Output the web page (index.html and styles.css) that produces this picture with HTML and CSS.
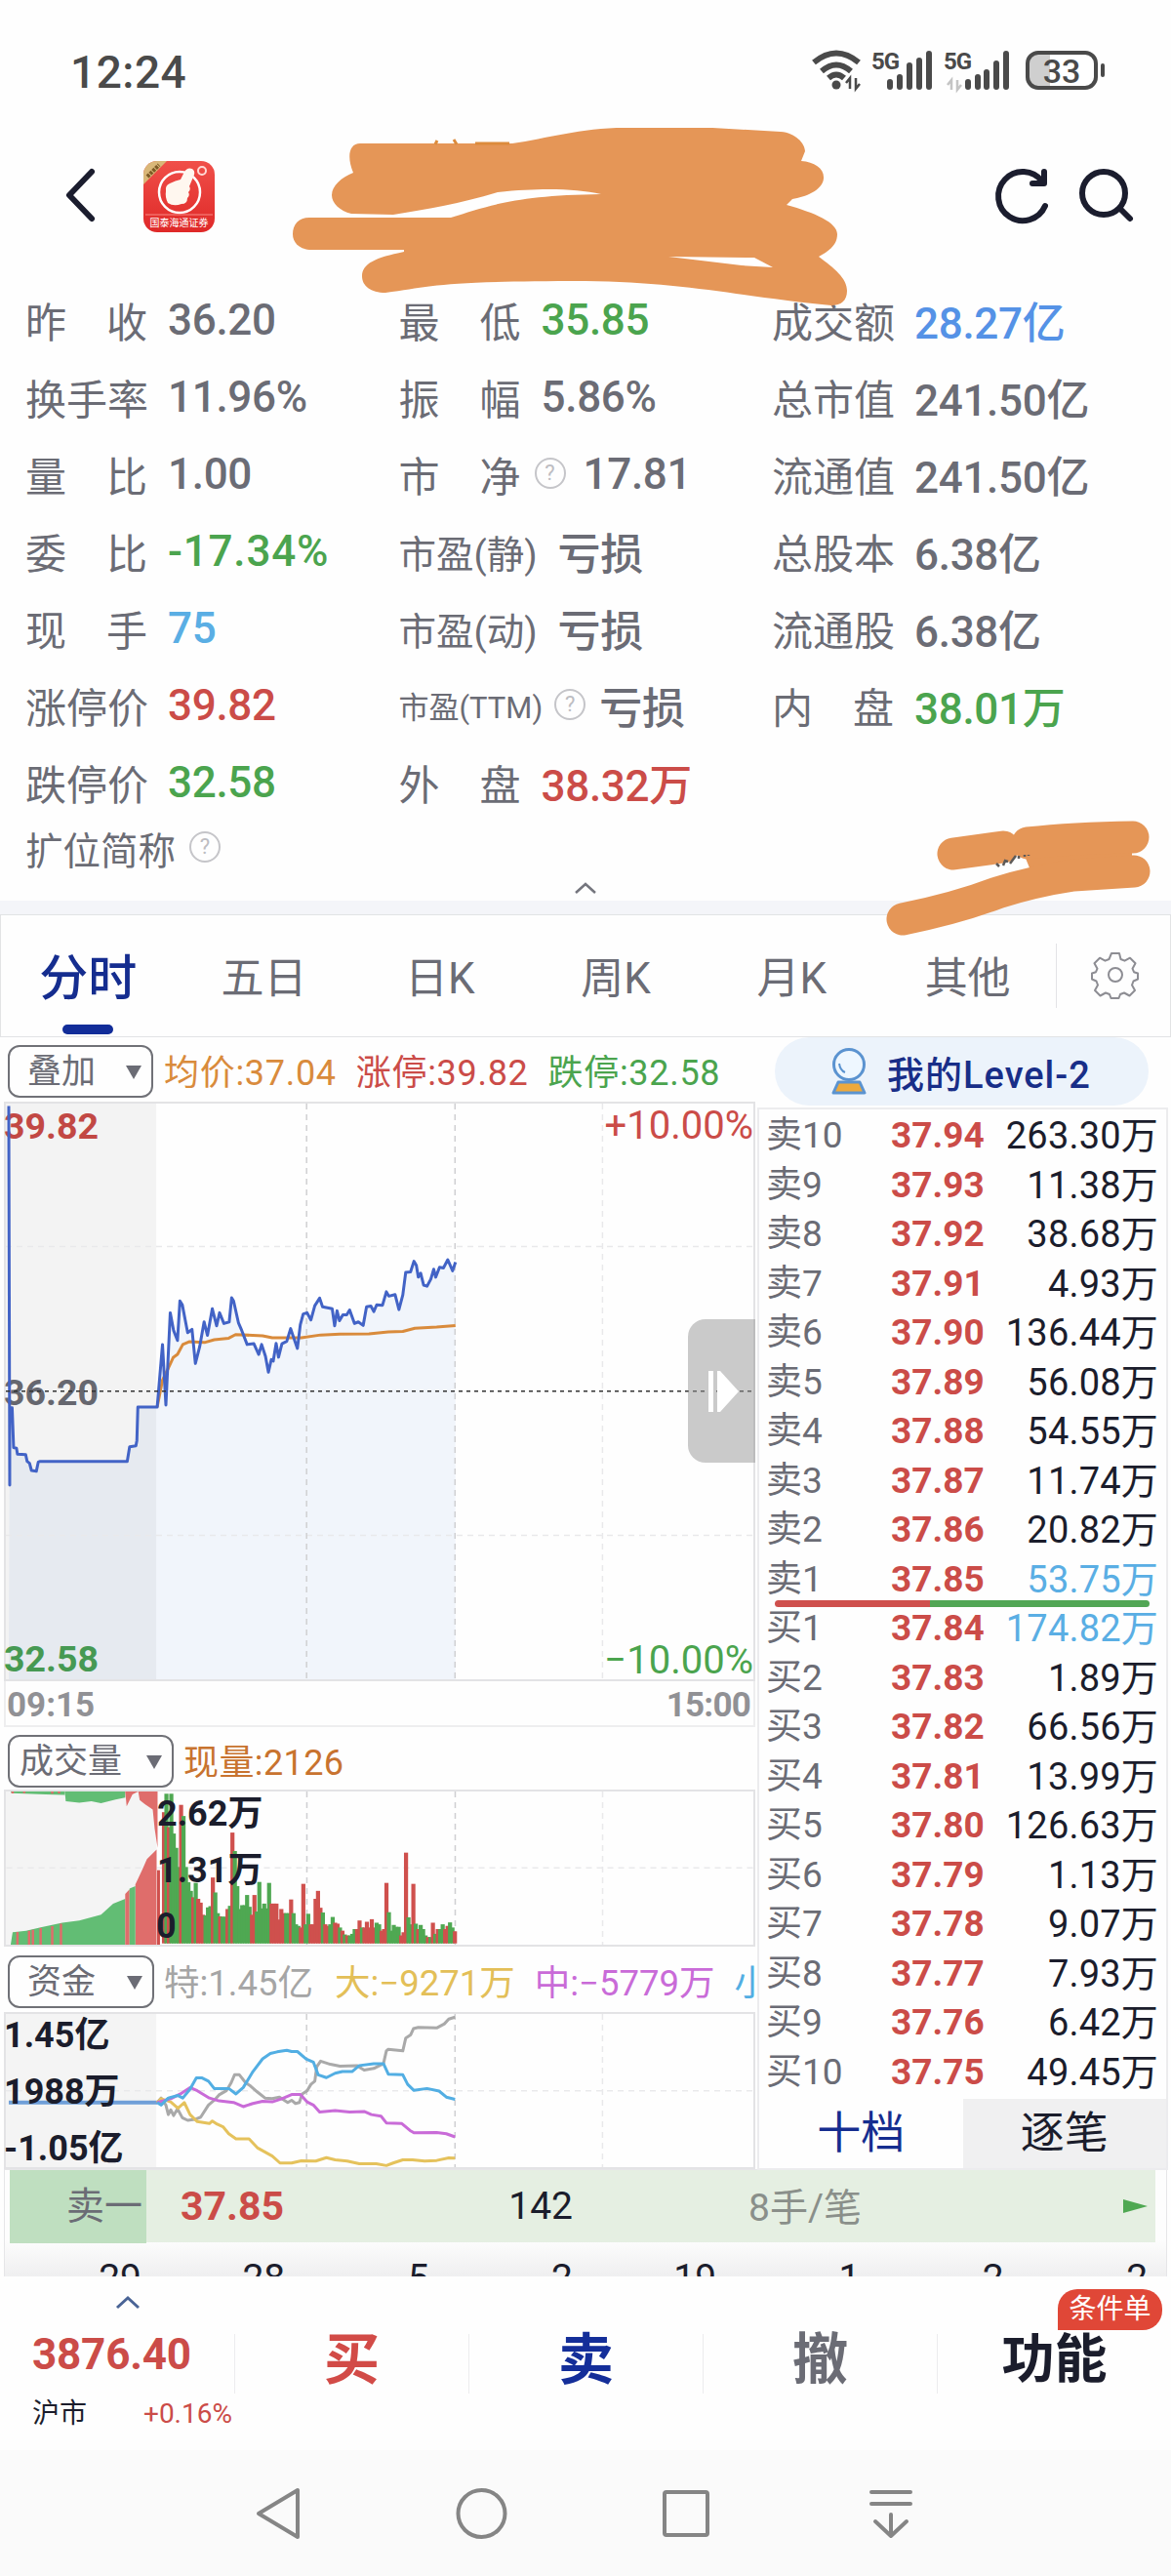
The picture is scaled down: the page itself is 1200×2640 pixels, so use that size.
FILE: index.html
```
<!DOCTYPE html>
<html lang="zh-CN">
<head>
  <meta charset="utf-8">
  <title>分时</title>
  <link rel="stylesheet" href="styles.css">
</head>

<body>
  <div class="status-bar">
    <div class="clock">12:24</div>
    <svg class="status-icons" width="310" height="50" viewBox="828 48 310 50">
      <g fill="none" stroke="#4a4a4a" stroke-width="6">
        <path d="M834 64 Q857 45 880 64"/>
        <path d="M842 73 Q857 60 872 73"/>
        <path d="M849 80 Q857 73 865 80"/>
      </g>
      <circle cx="857" cy="87" r="4.5" fill="#4a4a4a"/>
      <path d="M871 91V80l-4 5M877 80v11l4-5" fill="none" stroke="#4a4a4a" stroke-width="2.5"/>
      <text class="net" x="893" y="71">5G</text>
      <text class="net" x="967" y="71">5G</text>
      <g stroke="#4a4a4a" stroke-width="6" stroke-linecap="round">
        <path d="M912 84v5M922 79v10M932 67v22M952 55v34M942 62v27"/>
        <path d="M992 84v5M1002 79v10M1011 74v15M1021 65v24M1031 55v34"/>
      </g>
      <path d="M975 92V82l-4 5M981 82v10l4-5" fill="none" stroke="#c4c4c4" stroke-width="2.5"/>
      <rect x="1053" y="54" width="70" height="36" rx="11" fill="#fff"/>
      <path d="M1064 54h12v36h-12q-11 0-11-11v-14q0-11 11-11z" fill="#cfcfcf"/>
      <rect x="1053" y="54" width="70" height="36" rx="11" fill="none" stroke="#4a4a4a" stroke-width="4"/>
      <path d="M1130 67v10" stroke="#4a4a4a" stroke-width="4" stroke-linecap="round"/>
      <text class="battery" x="1088" y="85" text-anchor="middle">33</text>
    </svg>
  </div>

  <div class="header">
    <svg class="back" width="34" height="58" viewBox="0 0 34 58"><path d="M29 5 L6 29 L29 53" fill="none" stroke="#1b1d2e" stroke-width="6" stroke-linecap="round" stroke-linejoin="round"/></svg>
    <div class="logo">
      <svg width="73" height="73" viewBox="0 0 73 73">
        <path d="M0 0h24L0 24z" fill="#d9b778"/>
        <path d="M4 16L16 4" stroke="#7d5a25" stroke-width="4" stroke-dasharray="3 1"/>
        <circle cx="37" cy="32" r="21" fill="none" stroke="#fff" stroke-width="2.5"/>
        <path d="M27 23q6-3 11-4l4-8q3-5 8-3 3 2 2 6l-5 12q2 3-1 6 2 3-1 6 0 6-6 6-8 3-14-1-3-6-2-12-1-6 4-8z" fill="#fff7ef"/>
        <circle cx="60" cy="10" r="4" fill="none" stroke="#ffd9d5" stroke-width="2"/>
        <path d="M2 55H71" stroke="#f98b84" stroke-width="1"/>
        <text x="36.5" y="67" text-anchor="middle">国泰海通证券</text>
      </svg>
    </div>
    <svg class="tools" width="150" height="64" viewBox="1016 168 150 64">
      <g fill="none" stroke="#1b1d2e" stroke-width="6" stroke-linecap="round" stroke-linejoin="round">
        <path d="M1069 211A25 25 0 1 1 1066 186"/>
        <path d="M1068 176v12h-12"/>
        <circle cx="1129" cy="198" r="22"/>
        <path d="M1146 214l10 10"/>
      </g>
    </svg>
    <svg class="scribble-name" width="580" height="190" viewBox="295 125 580 190">
      <path fill="#e59657" d="M369 147 H525 C560 142 595 131 640 131 H730 L800 135 C815 136 825 147 825 155 L821 165 C835 166 845 173 844 183 C843 195 825 202 812 204 L806 210 C835 218 858 228 858 240 C858 252 848 258 839 263 C855 275 868 285 868 298 C868 308 862 313 852 313 C760 304 700 289 600 288 C450 288 445 293 395 300 C380 300 371 293 371 283 C371 270 385 264 414 258 V256 H317 C306 255 300 248 300 240 C300 230 306 223 317 223 H462 C500 211 530 200 616 199 C590 194 560 192 510 197 C470 209 440 214 403 220 L360 219 C348 216 340 208 340 200 C340 190 350 182 362 177 C355 160 358 147 369 147Z"/>
      <path fill="#fff" d="M685 263 L773 264 L792 274 L760 272Z"/>
      <path d="M448 144l-2 4M465 143l3 5M487 147h35" stroke="#dc8b3c" stroke-width="3"/>
    </svg>
  </div>

  <div class="stats">
    <div class="stats-col">
      <div class="stat"><span class="label">昨 收</span><span class="value">36.20</span></div>
      <div class="stat"><span class="label">换手率</span><span class="value">11.96%</span></div>
      <div class="stat"><span class="label">量 比</span><span class="value">1.00</span></div>
      <div class="stat"><span class="label">委 比</span><span class="value green wide">-17.34%</span></div>
      <div class="stat"><span class="label">现 手</span><span class="value sky">75</span></div>
      <div class="stat"><span class="label">涨停价</span><span class="value red">39.82</span></div>
      <div class="stat"><span class="label">跌停价</span><span class="value green">32.58</span></div>
      <div class="stat last"><span class="label-mid">扩位简称</span><span class="help">?</span></div>
    </div>
    <div class="stats-col">
      <div class="stat"><span class="label">最 低</span><span class="value green">35.85</span></div>
      <div class="stat"><span class="label">振 幅</span><span class="value">5.86%</span></div>
      <div class="stat"><span class="label">市 净</span><span class="help">?</span><span class="value">17.81</span></div>
      <div class="stat"><span class="label-mid">市盈(静)</span><span class="value">亏损</span></div>
      <div class="stat"><span class="label-mid">市盈(动)</span><span class="value">亏损</span></div>
      <div class="stat"><span class="label-small">市盈(TTM)</span><span class="help">?</span><span class="value">亏损</span></div>
      <div class="stat"><span class="label">外 盘</span><span class="value red">38.32万</span></div>
    </div>
    <div class="stats-col">
      <div class="stat"><span class="label">成交额</span><span class="value blue">28.27亿</span></div>
      <div class="stat"><span class="label">总市值</span><span class="value">241.50亿</span></div>
      <div class="stat"><span class="label">流通值</span><span class="value">241.50亿</span></div>
      <div class="stat"><span class="label">总股本</span><span class="value">6.38亿</span></div>
      <div class="stat"><span class="label">流通股</span><span class="value">6.38亿</span></div>
      <div class="stat"><span class="label">内 盘</span><span class="value green">38.01万</span></div>
    </div>
    <svg class="collapse" width="24" height="14" viewBox="0 0 24 14"><path d="M2 12L12 3l10 9" fill="none" stroke="#74757d" stroke-width="2.5"/></svg>
    <svg class="scribble-code" width="290" height="130" viewBox="900 835 290 130">
      <path fill="#e59657" d="M1065 862L1160 858V892L1060 902 1048 872Z"/>
      <path fill="none" stroke="#e59657" stroke-width="33" stroke-linecap="round" stroke-linejoin="round" d="M977 875L1028 868M1053 864Q1100 859 1161 858M1162 893L1100 897Q1060 903 1022 915Q980 931 925 942"/>
      <path d="M1021 885l3 3M1028 887l2-5 3 1M1035 885l6-8M1044 880v-3M1050 878v-2M1054 877v-1" stroke="#5d5a58" stroke-width="2.5" fill="none"/>
    </svg>
  </div>

  <div class="tabs">
    <div class="tab active">分时</div>
    <div class="tab">五日</div>
    <div class="tab">日K</div>
    <div class="tab">周K</div>
    <div class="tab">月K</div>
    <div class="tab">其他</div>
    <div class="settings">
      <svg width="50" height="50" viewBox="0 0 50 50">
        <path fill="none" stroke="#8d8d93" stroke-width="2" stroke-linejoin="round" d="M21 3h8l1.500 6 4 1.700 5.500-3 5.500 5.500-3 5.500 1.500 3.500 4 1.300v6l-4.500 2-1.500 4 3 5.500-5.500 5.500-5.500-3-4 1.500-1.500 4h-8l-1.500-4-4-1.500-5.500 3-5.500-5.500 3-5.500-1.500-4-4.500-2v-6l4-1.300 1.500-3.500-3-5.500 5.500-5.500 5.500 3 4-1.700z"/>
        <circle cx="25" cy="25" r="7" fill="none" stroke="#8d8d93" stroke-width="2"/>
      </svg>
    </div>
  </div>

  <div class="main">
    <div class="charts">
      <div class="chart-head">
        <div class="select w149">叠加<i></i></div>
        <span class="avg">均价:37.04</span>
        <span class="red up-limit">涨停:39.82</span>
        <span class="green down-limit">跌停:32.58</span>
      </div>
      <div class="chart price-chart">
        <span class="axis red top">39.82</span>
        <span class="axis gray mid">36.20</span>
        <span class="axis green bottom">32.58</span>
        <span class="percent red top">+10.00%</span>
        <span class="percent green bottom">−10.00%</span>
        <svg viewBox="9 22 1546 1453" preserveAspectRatio="none">
          <rect x="9" y="22" width="311" height="1453" fill="#000" fill-opacity="0.045"/>
          <polygon id="priceArea" fill="#3f7fd0" fill-opacity="0.065"/>
          <g class="grid"><path d="M9 383H1555M9 1112H1555M1243 22V1475"/><path class="dark" d="M631 22V1475M938 22V1475"/></g>
          <polyline class="line" stroke="#d98b3c" points="322,788 333,720 345,690 355,663 364,655 375,630 388,623 420,625 440,618 470,614 484,605 540,608 560,613 620,613 660,606 700,604 760,603 800,598 830,597 855,589 900,586 939,582"/>
          <polyline id="priceLine" class="line" stroke="#4263c6" points="15,28 17,985 17,790 22,790 25,890 31,892 33,907 50,908 53,925 58,930 62,948 72,950 76,927 80,925 260,925 265,888 278,886 280,872 282,788 322,788 333,630 340,783 349,550 356,595 364,620 369,520 374,530 385,600 394,592 401,678 410,635 419,573 426,607 436,540 445,583 451,550 460,577 471,573 476,512 480,520 490,575 497,595 508,630 522,628 532,655 538,630 546,660 552,700 558,668 562,672 568,627 573,662 580,628 590,622 598,590 604,612 612,640 618,580 624,553 632,550 640,568 648,532 658,513 664,535 684,540 689,583 694,545 699,570 706,555 714,555 720,543 730,577 738,573 748,582 755,535 764,533 770,547 776,530 788,531 796,497 801,508 814,504 822,542 830,505 836,448 846,447 853,420 858,430 862,460 867,450 873,480 880,483 888,465 894,440 898,460 906,435 914,437 923,416 933,444 939,422"/>
          <path class="base" d="M9 748H1555"/>
        </svg>
        <div class="handle"><svg width="34" height="44" viewBox="0 0 34 44"><path d="M1 1h5v42H1zM10 1h3l19 21-19 21h-3z" fill="#fff"/></svg></div>
      </div>
      <div class="times"><span>09:15</span><span>15:00</span></div>

      <div class="chart-head volume-head">
        <div class="select w170">成交量<i></i></div>
        <span class="now">现量:2126</span>
      </div>
      <div class="chart small-chart">
        <svg viewBox="8 253 1547 481" preserveAspectRatio="none">
          <rect x="8" y="253" width="312" height="481" fill="#f4f4f4"/>
          <g class="grid"><path d="M9 493H1555M1243 253V734"/><path class="dark" d="M631 253V734M938 253V734"/></g>
          <path fill="#62bd74" d="M18 734L22 695 50 690 80 680 125 665 160 658 205 640 230 605 255 590V734Z"/>
          <path fill="#62bd74" d="M130 253H255V272L235 278 205 290 185 284 160 288 132 284Z"/>
          <path fill="#62bd74" d="M18 253H130V264L90 262 20 258Z"/>
          <path fill="#df6d6b" d="M255 734V575L264 560V734ZM276 734V545L290 500 300 465 320 435V734Z"/>
          <path fill="#62bd74" d="M264 734V558L276 550V734Z"/>
          <path fill="#df6d6b" d="M255 253H322V430L316 370 312 310 295 292 285 280 282 253 270 262 258 300Z"/>
          <path stroke="#df6d6b" stroke-width="5" d="M32 734V694M56 734V690M64 734V687M80 734V682M104 734V676M122 734V668M22 253V259M46 253V258M104 253V260M118 253V259"/>
          <path stroke="#cf504d" stroke-width="6" d="M324 734V500"/>
          <g id="volumeBars"></g>
        </svg>
        <span class="axis dark v1">2.62万</span>
        <span class="axis dark v2">1.31万</span>
        <span class="axis dark v3">0</span>
      </div>

      <div class="chart-head fund-head">
        <div class="select w150">资金<i></i></div>
        <span class="f-super">特:1.45亿</span>
        <span class="f-big">大:−9271万</span>
        <span class="f-mid">中:−5779万</span>
        <span class="f-small">小</span>
      </div>
      <div class="chart small-chart">
        <svg viewBox="9 214 1546 481" preserveAspectRatio="none">
          <rect x="9" y="214" width="311" height="481" fill="#f4f4f4"/>
          <g class="grid"><path d="M9 455H1555M1243 214V695"/><path class="dark" d="M631 214V695M938 214V695"/></g>
          <path d="M15 492H322" stroke="#6f9fd8" stroke-width="4" vector-effect="non-scaling-stroke"/>
          <polyline class="line" stroke="#a9a9a9" points="322,492 330,478 340,500 345,530 350,515 356,533 364,512 374,540 385,548 400,545 412,538 428,500 440,485 450,468 465,455 475,430 482,405 492,405 505,430 515,440 530,460 545,478 560,480 575,475 592,492 600,485 608,495 616,492 622,465 632,455 640,435 648,425 652,380 660,362 680,372 700,378 735,376 750,390 770,385 790,370 796,330 800,325 830,330 836,290 846,280 852,260 862,256 900,258 916,245 925,230 938,224"/>
          <polyline class="line" stroke="#e5c25c" points="322,492 330,480 350,490 365,510 378,492 390,530 405,552 430,558 436,550 446,560 458,568 470,590 485,606 512,606 530,635 560,660 576,682 600,682 620,675 650,676 672,665 690,672 715,676 740,684 775,684 796,690 810,682 830,672 850,672 875,676 900,674 925,666 938,667"/>
          <polyline class="line" stroke="#c96bd8" points="322,492 350,480 370,465 390,445 405,455 430,478 450,487 480,492 500,505 520,495 540,488 560,490 580,480 600,467 618,467 632,490 645,500 658,522 690,517 720,522 750,520 765,530 785,535 796,556 828,558 845,580 853,587 900,586 920,590 938,600"/>
          <polyline class="line" stroke="#52aee3" points="322,492 330,500 345,478 365,470 375,478 390,450 403,415 415,415 428,425 440,448 470,448 485,465 500,445 520,395 540,355 556,338 570,333 590,328 600,332 612,332 630,355 645,365 655,405 672,414 690,400 705,395 725,395 740,376 770,370 790,370 800,403 830,405 840,435 853,454 880,448 905,456 920,475 938,482"/>
        </svg>
        <span class="axis dark f1">1.45亿</span>
        <span class="axis dark f2">1988万</span>
        <span class="axis dark f3">-1.05亿</span>
      </div>
    </div>

    <div class="book">
      <div class="level2">
        <svg width="38" height="50" viewBox="0 0 38 50">
          <path d="M8 36h22l5 11H3z" fill="#eda93c" stroke="#5b93d0" stroke-width="3" stroke-linejoin="round"/>
          <circle cx="19" cy="18" r="15.5" fill="#eef7ff" stroke="#5b93d0" stroke-width="3"/>
          <path d="M9 17q1 7 6 9" fill="none" stroke="#5b93d0" stroke-width="2"/>
        </svg>
        <span>我的Level-2</span>
      </div>
      <div class="orders">
        <div class="order"><span>卖10</span><b>37.94</b><em>263.30万</em></div>
        <div class="order"><span>卖9</span><b>37.93</b><em>11.38万</em></div>
        <div class="order"><span>卖8</span><b>37.92</b><em>38.68万</em></div>
        <div class="order"><span>卖7</span><b>37.91</b><em>4.93万</em></div>
        <div class="order"><span>卖6</span><b>37.90</b><em>136.44万</em></div>
        <div class="order"><span>卖5</span><b>37.89</b><em>56.08万</em></div>
        <div class="order"><span>卖4</span><b>37.88</b><em>54.55万</em></div>
        <div class="order"><span>卖3</span><b>37.87</b><em>11.74万</em></div>
        <div class="order"><span>卖2</span><b>37.86</b><em>20.82万</em></div>
        <div class="order"><span>卖1</span><b>37.85</b><em class="sky">53.75万</em><div class="ratio"></div></div>
        <div class="order"><span>买1</span><b>37.84</b><em class="sky">174.82万</em></div>
        <div class="order"><span>买2</span><b>37.83</b><em>1.89万</em></div>
        <div class="order"><span>买3</span><b>37.82</b><em>66.56万</em></div>
        <div class="order"><span>买4</span><b>37.81</b><em>13.99万</em></div>
        <div class="order"><span>买5</span><b>37.80</b><em>126.63万</em></div>
        <div class="order"><span>买6</span><b>37.79</b><em>1.13万</em></div>
        <div class="order"><span>买7</span><b>37.78</b><em>9.07万</em></div>
        <div class="order"><span>买8</span><b>37.77</b><em>7.93万</em></div>
        <div class="order"><span>买9</span><b>37.76</b><em>6.42万</em></div>
        <div class="order"><span>买10</span><b>37.75</b><em>49.45万</em></div>
        <div class="book-tabs"><div class="on">十档</div><div>逐笔</div></div>
      </div>
    </div>
  </div>

  <div class="queue">
    <div class="queue-head">
      <span class="q-label">卖一</span>
      <span class="q-price">37.85</span>
      <span class="q-count">142</span>
      <span class="q-avg">8手/笔</span>
      <i></i>
    </div>
    <div class="queue-row"><span>29</span><span>28</span><span>5</span><span>2</span><span>19</span><span>1</span><span>2</span><span>2</span></div>
  </div>

  <div class="toolbar">
    <div class="index">
      <svg width="26" height="16" viewBox="0 0 26 16"><path d="M2 13L13 3l11 10" fill="none" stroke="#4a6496" stroke-width="3"/></svg>
      <div class="point">3876.40</div>
      <div class="market"><span>沪市</span><span class="red">+0.16%</span></div>
    </div>
    <div class="action buy">买</div>
    <div class="action sell">卖</div>
    <div class="action cancel">撤</div>
    <div class="action more">功能<span class="badge">条件单</span></div>
  </div>

  <div class="nav">
    <svg width="1200" height="129" viewBox="0 2511 1200 129">
      <g fill="none" stroke="#858585" stroke-width="4" stroke-linejoin="round" stroke-linecap="round">
        <path d="M305 2552V2600L265 2576Z"/>
        <circle cx="493.5" cy="2576" r="24"/>
        <rect x="681" y="2554" width="44" height="44" rx="2"/>
        <path d="M893 2554h40M893 2566h40M913 2577v22M897 2584l16 15 16-15"/>
      </g>
    </svg>
  </div>

  <script>
    // colour and height of each minute bar
    const volumes = 'r412 g470 r365 g470 g345 g300 g240 r435 g400 g240 g192 g165 r145 g190 r140 r128 r90 g88 g113 g117 r207 g160 g95 r85 g84 g84 r108 g118 r348 g290 g180 g108 g120 g120 g152 g115 r90 r152 g100 g193 g110 g125 g110 g190 r125 r125 r125 r75 r108 r95 g95 g95 r138 g95 g60 g55 r50 r187 g60 g93 r60 r60 r140 r165 r112 g97 r60 r55 g60 g83 r65 r62 g50 r40 g28 r25 g25 g30 g45 r45 r72 g50 r50 r68 r50 r76 r50 g65 g60 r40 r45 r190 g98 g40 g58 g52 g52 r25 r35 r285 g82 g60 r187 g62 r45 g58 g45 g25 r20 g20 r65 g30 r45 g45 g60 r45 r55 g66 g50 r38'.split(' ');
    let bars = '';
    volumes.forEach((v, i) => {
      const h = Number(v.slice(1));
      const x = 331 + i * 5.06;
      bars += `<rect x="${x}" y="${730 - h}" width="8.5" height="${h}" fill="${v[0] === 'r' ? '#cf504d' : '#4fa852'}"/>`;
    });
    document.getElementById('volumeBars').innerHTML = bars;

    const line = document.getElementById('priceLine').getAttribute('points');
    document.getElementById('priceArea').setAttribute('points', '15,1475 ' + line.split(' ').slice(2).join(' ') + ' 939,1475');
  </script>
</body>
</html>
```

FILE: styles.css
```
* {
  box-sizing: border-box;
}

body {
  margin: 0;
  width: 1200px;
  height: 2640px;
  overflow: hidden;
  background: #fefefe;
  color: #6b6c75;
  font-family: Roboto, "Noto Sans CJK SC", sans-serif;
}

.red { color: #cb4c48; }
.green { color: #4ba44e; }
.blue { color: #5592e6; }
.sky { color: #5aaee4; }
.gray { color: #6b6c75; }
.dark { color: #1b1d2c; }

.status-bar {
  height: 130px;
  padding: 48px 62px 0 72px;
  display: flex;
  justify-content: space-between;
}

.clock {
  font-size: 46px;
  line-height: 52px;
  font-weight: 500;
  letter-spacing: 0.5px;
  color: #4a4a4a;
}

.net {
  font-size: 24px;
  font-weight: 700;
  letter-spacing: -1px;
  fill: #4a4a4a;
}

.battery {
  font-size: 34px;
  font-weight: 500;
  fill: #4a4a4a;
}

.header {
  height: 160px;
  padding: 35px 32px 0 65px;
  display: flex;
  align-items: flex-start;
  position: relative;
}

.back {
  margin-top: 6px;
}

.logo {
  width: 73px;
  height: 73px;
  margin-left: 48px;
  border-radius: 14px;
  overflow: hidden;
  background: linear-gradient(#f04f49, #df2928);
}

.logo text {
  font-size: 10px;
  fill: #fff;
}

.tools {
  margin: 3px 0 0 auto;
}

.scribble-name {
  position: absolute;
  left: 295px;
  top: -5px;
  z-index: 2;
}

.stats {
  height: 633px;
  padding-left: 26px;
  display: flex;
  position: relative;
}

.stats-col {
  width: 382.5px;
}

.stat {
  height: 79px;
  padding-bottom: 4px;
  display: flex;
  align-items: center;
  white-space: nowrap;
}

.stat.last {
  height: 55px;
}

.label {
  width: 125px;
  font-size: 42px;
  text-align-last: justify;
}

.label-mid {
  font-size: 38.5px;
}

.label-small {
  font-size: 31px;
}

.label-small + .help {
  margin-left: 12px;
}

.label-small ~ .value {
  margin-left: 17px;
}

.value {
  margin-left: 21px;
  font-size: 44px;
  font-weight: 500;
  letter-spacing: -0.3px;
}

.value.wide {
  letter-spacing: 0.8px;
}

.help {
  width: 32px;
  height: 32px;
  margin: -2px -3px 0 14px;
  border: 2px solid #c5c5c9;
  border-radius: 50%;
  font-size: 22px;
  line-height: 28px;
  text-align: center;
  color: #bdbdc2;
}

.collapse {
  position: absolute;
  left: 588px;
  top: 613px;
}

.scribble-code {
  position: absolute;
  left: 900px;
  top: 545px;
  z-index: 2;
}

.tabs {
  height: 140px;
  border-top: 14px solid #f4f5f9;
  box-shadow: inset 0 0 0 1px #e2e3e5;
  display: flex;
}

.tab {
  width: 180.3px;
  padding-top: 33px;
  font-size: 44px;
  line-height: 66px;
  text-align: center;
}

.tab.active {
  position: relative;
  font-size: 50px;
  font-weight: 500;
  color: #152d8f;
}

.tab.active::after {
  content: "";
  position: absolute;
  left: 64px;
  top: 113px;
  width: 52px;
  height: 10px;
  border-radius: 5px;
  background: #122d99;
}

.settings {
  flex: 1;
  height: 66px;
  margin-top: 30px;
  padding: 7px 0 0 35px;
  border-left: 1px solid #e3e3e6;
}

.main {
  height: 1160px;
  display: flex;
}

.charts {
  width: 774px;
  padding-left: 4px;
}

.chart-head {
  height: 66px;
  padding: 8px 0 0 4px;
  display: flex;
  align-items: flex-start;
  font-size: 36px;
  line-height: 58px;
  white-space: nowrap;
  overflow: hidden;
}

.select {
  flex: none;
  height: 54px;
  padding: 2px 10px 0 18px;
  display: flex;
  align-items: center;
  justify-content: space-between;
  border: 2px solid #707177;
  border-radius: 12px;
  font-size: 35px;
  line-height: 50px;
}

.select i {
  border: 8px solid transparent;
  border-top: 14px solid #6b6c75;
  border-bottom: 0;
}

.w149 { width: 149px; }
.w150 { width: 150px; }
.w170 { width: 170px; padding-left: 10px; }

.avg { margin-left: 11px; color: #d98b3c; }

.avg,
.up-limit,
.down-limit {
  letter-spacing: 0.7px;
}

.up-limit,
.down-limit {
  margin-left: 20px;
}

.chart {
  position: relative;
  border: 2px solid #e3e3e5;
}

.chart > svg {
  display: block;
  width: 100%;
  height: 100%;
  position: relative;
}

.price-chart {
  height: 594px;
}

.small-chart {
  height: 161px;
}

.line {
  fill: none;
  stroke-width: 3;
  stroke-linejoin: round;
  vector-effect: non-scaling-stroke;
}

.grid path {
  stroke: #e9e9eb;
  stroke-width: 1.5;
  stroke-dasharray: 6 5;
  vector-effect: non-scaling-stroke;
}

.grid path.dark {
  stroke: #cfcfd2;
}

.base {
  stroke: #333;
  stroke-width: 1.5;
  stroke-dasharray: 4 4;
  vector-effect: non-scaling-stroke;
}

.axis,
.percent {
  position: absolute;
  line-height: 40px;
  white-space: nowrap;
}

.axis {
  left: -2px;
  font-size: 37.5px;
  font-weight: 700;
}

.percent {
  right: 0;
  font-size: 40px;
}

.top { top: 3px; }
.mid { top: 276px; }
.bottom { bottom: -1px; }
.axis.bottom { bottom: 1px; }

.small-chart .axis {
  font-size: 36px;
}

.v1 { margin-left: 157px; top: 3px; }
.v2 { margin-left: 157px; top: 61px; }
.v3 { margin-left: 156px; top: 118px; }
.f1 { top: 2px; }
.f2 { top: 60px; }
.f3 { top: 118px; }

.handle {
  position: absolute;
  right: -2px;
  top: 221px;
  width: 69px;
  height: 147px;
  padding: 52px 0 0 20px;
  border-radius: 18px 0 0 18px;
  background: rgba(150, 150, 150, 0.5);
}

.times {
  height: 47px;
  padding: 4px 3px 0 1px;
  display: flex;
  justify-content: space-between;
  border: 2px solid #eeeeef;
  border-top: 0;
  font-size: 35px;
  line-height: 42px;
  font-weight: 700;
  color: #919195;
}

.times span:last-child {
  letter-spacing: -0.8px;
}

.volume-head {
  height: 64px;
}

.now {
  margin-left: 10px;
  letter-spacing: 0.4px;
  color: #c8732f;
}

.fund-head {
  height: 67px;
  padding-top: 9px;
}

.fund-head span {
  font-size: 36.5px;
}

.f-super { margin-left: 10px; color: #a5a5a5; }
.f-big { margin-left: 22px; color: #e3bf58; }
.f-mid { margin-left: 20px; color: #c96bd8; }
.f-small { margin-left: 20px; color: #52aee3; }

.book {
  width: 426px;
}

.level2 {
  width: 383px;
  height: 70px;
  margin-left: 20px;
  padding-left: 57px;
  display: flex;
  align-items: center;
  border-radius: 35px;
  background: #ecf3fb;
  font-size: 38px;
  font-weight: 500;
  letter-spacing: 1px;
  color: #182e88;
}

.level2 span {
  margin-left: 20px;
}

.orders {
  width: 421px;
  height: 1089px;
  margin: 2px 0 0 2px;
  padding-top: 2px;
  border: 2px solid #ececee;
}

.order {
  height: 50.5px;
  padding: 0 8px 0 7px;
  display: flex;
  align-items: center;
  position: relative;
  font-size: 37px;
  line-height: 48px;
}

.order span {
  width: 128px;
}

.order b {
  color: #cb4c48;
}

.order em {
  margin-left: auto;
  font-size: 38px;
  font-style: normal;
  letter-spacing: 0.2px;
  color: #1b1d2c;
}

.order em.sky {
  color: #5aaee4;
}

.ratio {
  position: absolute;
  left: 16px;
  right: 17px;
  bottom: -3px;
  height: 7px;
  border-radius: 4px;
  background: linear-gradient(90deg, #cf504d 41.3%, #52a655 41.3%);
}

.book-tabs {
  height: 71px;
  margin-top: 2px;
  display: flex;
  font-size: 45px;
  line-height: 72px;
  text-align: center;
  color: #1b1d2c;
}

.book-tabs div {
  width: 210px;
  background: #f0f0f1;
}

.book-tabs .on {
  background: none;
  color: #152d8f;
}

.queue {
  height: 110px;
  margin: 0 4px;
  border: 1px solid #e6e6e8;
  border-bottom: 0;
  background: linear-gradient(#fdfdfd 65%, #efeff0);
  overflow: hidden;
}

.queue-head {
  width: 1174px;
  height: 74px;
  margin-left: 5px;
  display: flex;
  align-items: center;
  background: #e5efe2;
  font-size: 39px;
  position: relative;
}

.q-label {
  width: 140px;
  padding-right: 4px;
  line-height: 76px;
  text-align: right;
  background: #bfdfc0;
}

.q-price {
  width: 239px;
  padding-left: 35px;
  font-size: 41px;
  font-weight: 700;
  color: #cb4c48;
}

.q-count {
  width: 198px;
  text-align: right;
  color: #1b1d2c;
}

.q-avg {
  width: 296px;
  margin-top: -4px;
  text-align: right;
  color: #8a8f8a;
}

.queue-head i {
  margin-left: auto;
  margin-right: 8px;
  border: 7px solid transparent;
  border-left: 25px solid #4fa852;
  border-right: 0;
}

.queue-row {
  width: 1175px;
  padding-top: 14px;
  display: flex;
  font-size: 39px;
  line-height: 46px;
  color: #1b1d2c;
}

.queue-row span {
  width: 147.3px;
  text-align: right;
}

.queue-row span:first-child {
  width: 140px;
}

.toolbar {
  height: 178px;
  display: flex;
  background: #fefefe;
}

.index {
  width: 240px;
  padding: 19px 0 0 33px;
}

.index svg {
  display: block;
  margin-left: 85px;
}

.point {
  margin-top: 18px;
  font-size: 44px;
  line-height: 54px;
  font-weight: 700;
  letter-spacing: -0.2px;
  color: #cb4c48;
}

.market {
  margin-top: 13px;
  padding-right: 2px;
  display: flex;
  justify-content: space-between;
  align-items: center;
  font-size: 28px;
  line-height: 42px;
  color: #1b1d2c;
}

.market .red {
  color: #cb4c48;
  font-size: 28px;
}

.action {
  width: 240px;
  height: 61px;
  margin-top: 59px;
  border-left: 1px solid #ececee;
  font-size: 57px;
  line-height: 53px;
  font-weight: 700;
  text-align: center;
}

.buy { color: #d24b47; }
.sell { color: #142e99; }

.more {
  position: relative;
  font-size: 54px;
  color: #1b1d2c;
}

.badge {
  position: absolute;
  right: 9px;
  top: -46px;
  width: 107px;
  height: 42px;
  border-radius: 20px 20px 20px 0;
  background: #e04737;
  color: #fff;
  font-size: 28px;
  line-height: 41px;
  font-weight: 400;
}

.nav {
  height: 129px;
  background: #fafafa;
}

.nav svg {
  display: block;
}
```
